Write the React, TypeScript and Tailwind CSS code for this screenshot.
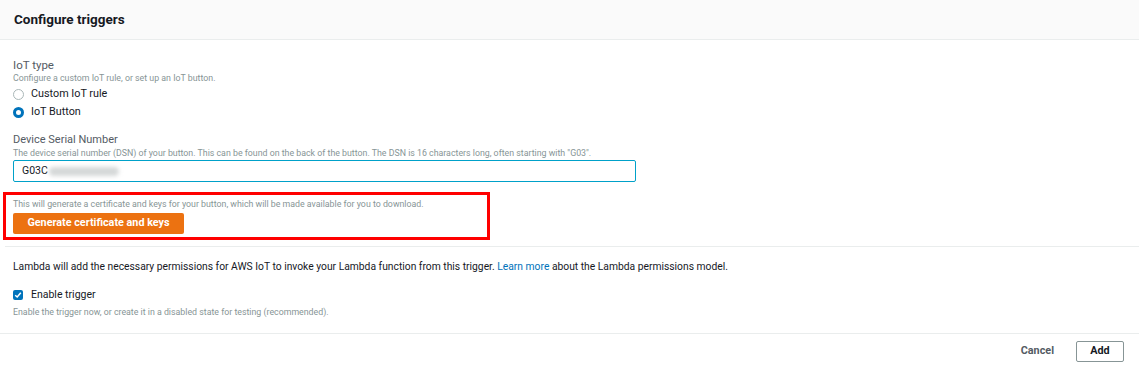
import React from "react";

export default function App() {
  const font = { fontFamily: "Roboto, 'Liberation Sans', sans-serif" };
  return (
    <div className="w-[1139px] h-[366px] bg-white overflow-hidden text-[#16191f]" style={font}>
      <div className="h-[40px] bg-[#fafafa] border-b border-[#eaeded] flex items-center px-[14px]">
        <h2 className="text-[13.5px] font-bold text-[#16191f]">Configure triggers</h2>
      </div>

      <div className="px-[13px] pt-[18px]">
        <div className="text-[11.5px] text-[#545b64] leading-[14px]">IoT type</div>
        <div className="text-[8.8px] text-[#879596] leading-[12px]">Configure a custom IoT rule, or set up an IoT button.</div>
        <div className="mt-[4px] flex flex-col gap-[5px]">
          <label className="flex items-center gap-[7px] h-[13px]">
            <span className="w-[11px] h-[11px] rounded-full border border-[#aab7b8] bg-white" />
            <span className="text-[10.8px] text-[#16191f]">Custom IoT rule</span>
          </label>
          <label className="flex items-center gap-[7px] h-[13px]">
            <span className="w-[11px] h-[11px] rounded-full border-[3px] border-[#0073bb] bg-white" />
            <span className="text-[10.8px] text-[#16191f]">IoT Button</span>
          </label>
        </div>

        <div className="mt-[14px] text-[11px] text-[#545b64] leading-[14px]">Device Serial Number</div>
        <div className="text-[8.8px] text-[#879596] leading-[12px]">
          The device serial number (DSN) of your button. This can be found on the back of the button. The DSN is 16 characters long, often starting with "G03".
        </div>
        <div className="mt-[1px] w-[623px] h-[22px] border border-[#00a1c9] rounded-[2px] flex items-center px-[8px]">
          <span className="text-[10.5px] text-[#16191f]">G03C</span>
          <span className="ml-[1px] w-[70px] h-[9px] rounded-full bg-[#d5d8d8] blur-[2px]" />
        </div>
      </div>

      <div className="mt-[10px] ml-[3px] w-[487px] h-[48px] border-[3px] border-[#ff0000] pl-[7px] pt-[3px]">
        <div className="text-[8.8px] text-[#879596] leading-[12px]">
          This will generate a certificate and keys for your button, which will be made available for you to download.
        </div>
        <button className="mt-[3px] w-[171px] h-[21px] bg-[#ec7211] rounded-[2px] text-white text-[10.8px] font-bold flex items-center justify-center">
          Generate certificate and keys
        </button>
      </div>

      <div className="mt-[6px] ml-[5px] border-t border-[#eaeded]" />

      <div className="px-[13px] pt-[13px]">
        <p className="text-[10.3px] leading-[14px] text-[#16191f]">
          Lambda will add the necessary permissions for AWS IoT to invoke your Lambda function from this trigger.{" "}
          <span className="text-[#0073bb]">Learn more</span> about the Lambda permissions model.
        </p>
        <label className="mt-[14px] flex items-center gap-[8px] h-[14px]">
          <span className="w-[10px] h-[10px] rounded-[2px] bg-[#0073bb] flex items-center justify-center">
            <svg width="8" height="8" viewBox="0 0 8 8">
              <path d="M1.2 4.2 L3.2 6 L6.8 1.8" fill="none" stroke="white" strokeWidth="1.5" />
            </svg>
          </span>
          <span className="text-[10.5px] text-[#16191f]">Enable trigger</span>
        </label>
        <div className="mt-[4px] text-[8.8px] text-[#879596] leading-[12px]">
          Enable the trigger now, or create it in a disabled state for testing (recommended).
        </div>
      </div>

      <div className="mt-[15px] border-t border-[#eaeded]" />

      <div className="flex justify-end items-center pr-[15px] pt-[7px] gap-[22px]">
        <button className="text-[10.8px] font-bold text-[#545b64]">Cancel</button>
        <button className="w-[48px] h-[21px] border border-[#879596] rounded-[2px] text-[10.8px] font-bold text-[#16191f]">Add</button>
      </div>
    </div>
  );
}
